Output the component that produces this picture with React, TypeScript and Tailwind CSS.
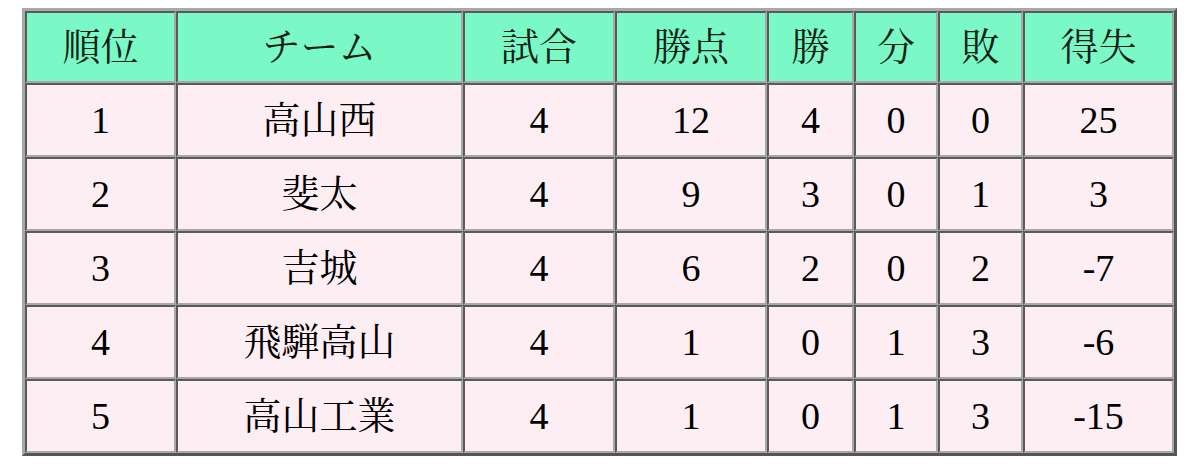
const head = ['順位', 'チーム', '試合', '勝点', '勝', '分', '敗', '得失'];

const rows = [
  ['1', '高山西', '4', '12', '4', '0', '0', '25'],
  ['2', '斐太', '4', '9', '3', '0', '1', '3'],
  ['3', '吉城', '4', '6', '2', '0', '2', '-7'],
  ['4', '飛騨高山', '4', '1', '0', '1', '3', '-6'],
  ['5', '高山工業', '4', '1', '0', '1', '3', '-15'],
];

const widths = ['w-[151px]', 'w-[287px]', 'w-[152px]', 'w-[152px]', 'w-[87px]', 'w-[84px]', 'w-[85px]', 'w-[151px]'];

const cell =
  'border-2 border-t-[#5a5a5a] border-l-[#5a5a5a] border-b-[#a8a8a8] border-r-[#a8a8a8] text-center align-middle p-0';

export default function App() {
  return (
    <div className="w-[1200px] h-[470px] bg-white pl-[22px] pt-[8px] font-['Liberation_Serif','Noto_Serif_CJK_JP','Noto_Sans_CJK_JP',serif] text-[38px] text-black">
      <table className="w-[1155px] table-fixed border-separate border-spacing-0 border-[3px] border-t-[#a8a8a8] border-l-[#a8a8a8] border-b-[#555] border-r-[#555]">
        <colgroup>
          {widths.map((w, i) => (
            <col key={i} className={w} />
          ))}
        </colgroup>
        <thead>
          <tr className="h-[72px]">
            {head.map((h) => (
              <th key={h} className={cell + ' bg-[#7af8c6] font-normal text-[#0d1f16]'}>
                {h}
              </th>
            ))}
          </tr>
        </thead>
        <tbody>
          {rows.map((r) => (
            <tr key={r[0]} className="h-[74px]">
              {r.map((v, i) => (
                <td key={i} className={cell + ' bg-[#fdeef3]'}>
                  {v}
                </td>
              ))}
            </tr>
          ))}
        </tbody>
      </table>
    </div>
  );
}
